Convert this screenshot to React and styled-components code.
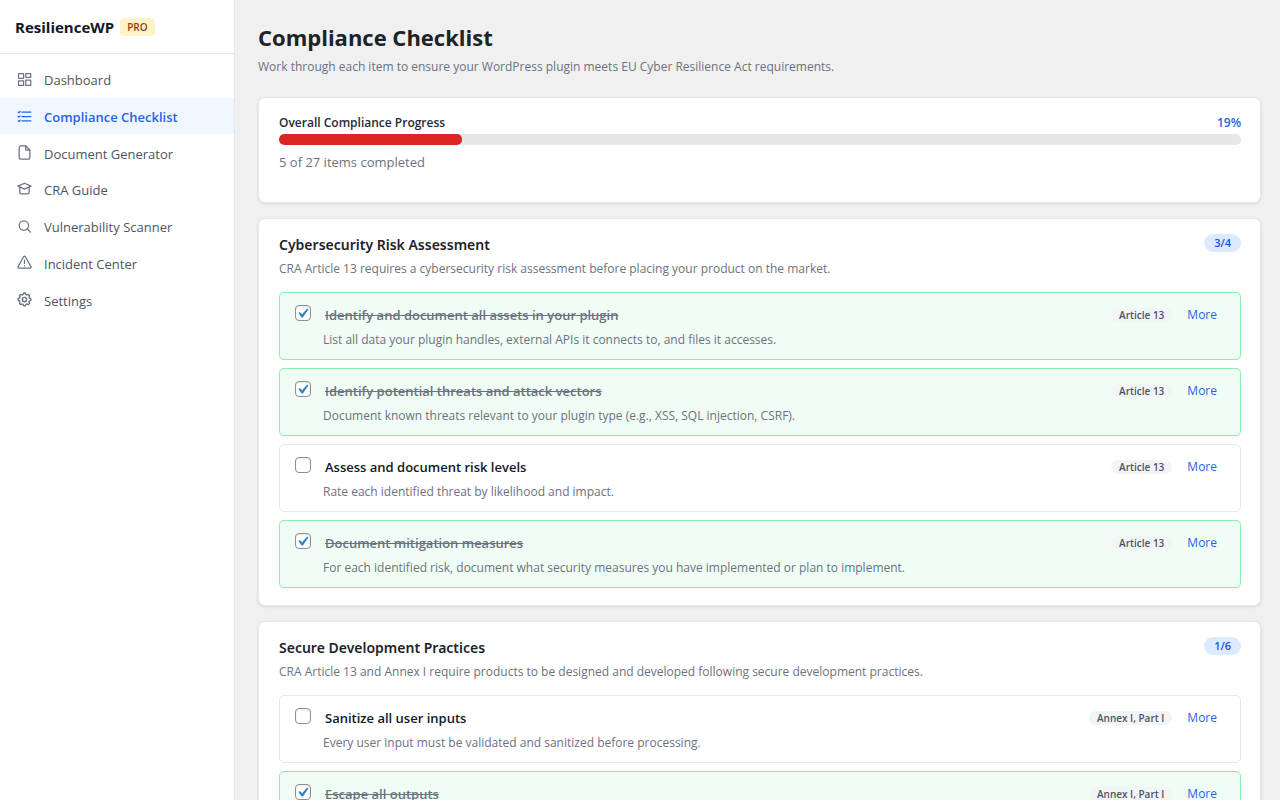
import React from "react";
import styled, { createGlobalStyle } from "styled-components";

const navItems = [
  { icon: "dashboard", label: "Dashboard" },
  { icon: "list", label: "Compliance Checklist", active: true },
  { icon: "file", label: "Document Generator" },
  { icon: "cap", label: "CRA Guide" },
  { icon: "search", label: "Vulnerability Scanner" },
  { icon: "alert", label: "Incident Center" },
  { icon: "gear", label: "Settings" },
];

const sections = [
  {
    title: "Cybersecurity Risk Assessment",
    count: "3/4",
    text: "CRA Article 13 requires a cybersecurity risk assessment before placing your product on the market.",
    items: [
      {
        id: "assets",
        title: "Identify and document all assets in your plugin",
        text: "List all data your plugin handles, external APIs it connects to, and files it accesses.",
        tag: "Article 13",
        done: true,
      },
      {
        id: "threats",
        title: "Identify potential threats and attack vectors",
        text: "Document known threats relevant to your plugin type (e.g., XSS, SQL injection, CSRF).",
        tag: "Article 13",
        done: true,
      },
      {
        id: "risk-levels",
        title: "Assess and document risk levels",
        text: "Rate each identified threat by likelihood and impact.",
        tag: "Article 13",
        done: false,
      },
      {
        id: "mitigation",
        title: "Document mitigation measures",
        text: "For each identified risk, document what security measures you have implemented or plan to implement.",
        tag: "Article 13",
        done: true,
      },
    ],
  },
  {
    title: "Secure Development Practices",
    count: "1/6",
    text: "CRA Article 13 and Annex I require products to be designed and developed following secure development practices.",
    items: [
      {
        id: "sanitize",
        title: "Sanitize all user inputs",
        text: "Every user input must be validated and sanitized before processing.",
        tag: "Annex I, Part I",
        done: false,
      },
      {
        id: "escape",
        title: "Escape all outputs",
        tag: "Annex I, Part I",
        done: true,
      },
    ],
  },
];

const icons = {
  dashboard: (
    <>
      <rect x="2.5" y="2.5" width="8" height="7.5" rx="0.5" />
      <rect x="14" y="2.5" width="8" height="6" rx="0.5" />
      <rect x="2.5" y="14" width="8" height="7.5" rx="0.5" />
      <rect x="14" y="13" width="8" height="8.5" rx="0.5" />
    </>
  ),
  list: (
    <>
      <path d="M8 5h14M8 12h14M8 19h14" />
      <path d="M2 5l1 1 2-2M2 12l1 1 2-2M2 19l1 1 2-2" />
    </>
  ),
  file: (
    <>
      <path d="M14 1.5H6A2.5 2.5 0 0 0 3.5 4v16A2.5 2.5 0 0 0 6 22.5h12a2.5 2.5 0 0 0 2.5-2.5V8z" />
      <path d="M14 1.5V8h6.5" />
    </>
  ),
  cap: (
    <>
      <path d="M12 2 1.5 6.500 12 11.5l10.500-5z" />
      <path d="M4.500 8.500V16c0 2 1 3 3 3h9c2 0 3-1 3-3V8.500" />
    </>
  ),
  search: (
    <>
      <circle cx="11" cy="10.5" r="7.5" />
      <path d="m16.500 16 5 5" />
    </>
  ),
  alert: (
    <>
      <path d="M10.800 2.500 1.500 19a1.500 1.500 0 0 0 1.200 2h18.600a1.500 1.500 0 0 0 1.200-2L13.200 2.500a1.400 1.400 0 0 0-2.400 0z" />
      <path d="M12 8.500v5M12 17v0.500" />
    </>
  ),
  gear: (
    <g transform="translate(-1.8 -1.8) scale(1.15)">
      <path d="M10.325 4.317c.426-1.756 2.924-1.756 3.350 0a1.724 1.724 0 0 0 2.573 1.066c1.543-.940 3.310.826 2.370 2.370a1.724 1.724 0 0 0 1.065 2.572c1.756.426 1.756 2.924 0 3.350a1.724 1.724 0 0 0-1.066 2.573c.940 1.543-.826 3.310-2.370 2.370a1.724 1.724 0 0 0-2.572 1.065c-.426 1.756-2.924 1.756-3.350 0a1.724 1.724 0 0 0-2.573-1.066c-1.543.940-3.310-.826-2.370-2.370a1.724 1.724 0 0 0-1.065-2.572c-1.756-.426-1.756-2.924 0-3.350a1.724 1.724 0 0 0 1.066-2.573c-.940-1.543.826-3.310 2.370-2.370.996.608 2.296.070 2.572-1.065z" />
      <circle cx="12" cy="12" r="3" />
    </g>
  ),
};

function App() {
  return (
    <Layout>
      <GlobalStyle />
      <Sidebar>
        <Brand>
          <BrandName>ResilienceWP</BrandName>
          <ProBadge>PRO</ProBadge>
        </Brand>
        <Nav>
          {navItems.map((item) => (
            <NavLink href="#" key={item.label} $active={item.active}>
              <NavIcon viewBox="0 0 24 24">{icons[item.icon]}</NavIcon>
              <NavLabel>{item.label}</NavLabel>
            </NavLink>
          ))}
        </Nav>
      </Sidebar>
      <Main>
        <PageTitle>Compliance Checklist</PageTitle>
        <PageText>
          Work through each item to ensure your WordPress plugin meets EU Cyber
          Resilience Act requirements.
        </PageText>
        <ProgressCard>
          <ProgressHead>
            <span>Overall Compliance Progress</span>
            <Percent>19%</Percent>
          </ProgressHead>
          <Track>
            <Fill style={{ width: "19%" }} />
          </Track>
          <ProgressText>5 of 27 items completed</ProgressText>
        </ProgressCard>
        {sections.map((section) => (
          <Card key={section.title}>
            <CardHead>
              <CardTitle>{section.title}</CardTitle>
              <Count>{section.count}</Count>
            </CardHead>
            <CardText>{section.text}</CardText>
            <Items>
              {section.items.map((item) => (
                <Item key={item.id} $done={item.done}>
                  <Checkbox id={item.id} type="checkbox" defaultChecked={item.done} />
                  <ItemBody>
                    <ItemHead>
                      <ItemTitle htmlFor={item.id} $done={item.done}>
                        {item.title}
                      </ItemTitle>
                      <Tag>{item.tag}</Tag>
                      <MoreButton type="button">More</MoreButton>
                    </ItemHead>
                    {item.text && <ItemText>{item.text}</ItemText>}
                  </ItemBody>
                </Item>
              ))}
            </Items>
          </Card>
        ))}
      </Main>
    </Layout>
  );
}

export default App;

const GlobalStyle = createGlobalStyle`
  * {
    box-sizing: border-box;
  }
  body {
    margin: 0;
    background: #f0f0f1;
    font-family: "Segoe UI", "Open Sans", "Noto Sans", sans-serif;
    font-size: 13px;
    color: #1d2327;
  }
  h1, h2, p {
    margin: 0;
  }
`;

const Layout = styled.div`
  display: flex;
  min-height: 100vh;
`;

const Sidebar = styled.aside`
  flex: 0 0 235px;
  background: #fff;
  border-right: 1px solid #e5e7eb;
`;

const Brand = styled.div`
  display: flex;
  align-items: center;
  gap: 6px;
  height: 54px;
  padding: 1px 15px 0;
  border-bottom: 1px solid #e5e7eb;
`;

const BrandName = styled.span`
  font-size: 15px;
  font-weight: 700;
  line-height: 20px;
  color: #111827;
`;

const ProBadge = styled.span`
  padding: 0 7px;
  border-radius: 4px;
  background: #fef3c7;
  color: #92400e;
  font-size: 10px;
  font-weight: 600;
  line-height: 18px;
`;

const Nav = styled.nav`
  display: grid;
  grid-auto-rows: 1fr;
  height: 257px;
  margin-top: 7px;
`;

const NavLink = styled.a`
  display: flex;
  align-items: center;
  gap: 12px;
  padding: 0 17px;
  text-decoration: none;
  color: ${(props) => (props.$active ? "#2563eb" : "#4b5563")};
  background: ${(props) => (props.$active ? "#eff6ff" : "transparent")};
  font-weight: ${(props) => (props.$active ? 600 : 400)};

  svg {
    stroke: ${(props) => (props.$active ? "#2563eb" : "#6b7280")};
  }
`;

const NavIcon = styled.svg`
  width: 15px;
  height: 15px;
  fill: none;
  stroke-width: 2;
  stroke-linecap: round;
  stroke-linejoin: round;
`;

const NavLabel = styled.span`
  padding-top: 2px;
`;

const Main = styled.main`
  flex: 1;
  min-width: 0;
  padding: 21px 19px 0 23px;
`;

const PageTitle = styled.h1`
  font-size: 22px;
  font-weight: 700;
  line-height: 32px;
`;

const PageText = styled.p`
  margin-top: 5px;
  line-height: 18px;
  font-size: 12px;
  color: #6b7280;
`;

const Card = styled.section`
  margin-bottom: 15px;
  padding: 15px 19px 17px 20px;
  background: #fff;
  border: 1px solid #e5e7eb;
  border-radius: 7px;
  box-shadow: 0 1px 3px rgba(0, 0, 0, 0.1);
`;

const ProgressCard = styled(Card)`
  margin-top: 21px;
  padding-top: 16px;
  padding-bottom: 30px;
`;

const ProgressHead = styled.div`
  display: flex;
  justify-content: space-between;
  line-height: 18px;
  font-size: 12px;
  font-weight: 600;
  color: #1f2937;
`;

const Percent = styled.span`
  color: #2563eb;
`;

const Track = styled.div`
  height: 11px;
  margin-top: 2px;
  border-radius: 5px;
  background: #e5e7eb;
  overflow: hidden;
`;

const Fill = styled.div`
  height: 100%;
  border-radius: 5px;
  background: #dc2626;
`;

const ProgressText = styled.p`
  margin-top: 7px;
  line-height: 20px;
  color: #6b7280;
`;

const CardHead = styled.div`
  display: flex;
  justify-content: space-between;
  align-items: flex-start;
`;

const CardTitle = styled.h2`
  font-family: "Noto Sans", sans-serif;
  font-size: 14px;
  font-weight: 600;
  line-height: 22px;
`;

const Count = styled.span`
  padding: 0 10px;
  border-radius: 9px;
  background: #dbeafe;
  color: #1d4ed8;
  font-size: 11px;
  font-weight: 600;
  line-height: 18px;
`;

const CardText = styled.p`
  margin-top: 3px;
  line-height: 20px;
  font-size: 12px;
  color: #6b7280;
`;

const Items = styled.div`
  display: flex;
  flex-direction: column;
  gap: 8px;
  margin-top: 13px;
`;

const Item = styled.div`
  display: flex;
  gap: 12px;
  min-height: 68px;
  padding: 12px 16px 7px 15px;
  border: 1px solid ${(props) => (props.$done ? "#86efac" : "#e5e7eb")};
  border-radius: 5px;
  background: ${(props) => (props.$done ? "#f0fdf4" : "#fff")};
`;

const Checkbox = styled.input`
  appearance: none;
  flex: none;
  width: 16px;
  height: 16px;
  margin: 0;
  border: 1px solid #8c8f94;
  border-radius: 4px;
  background: #fff;
  box-shadow: inset 0 1px 2px rgba(0, 0, 0, 0.1);

  &:checked::before {
    content: "";
    display: block;
    width: 19px;
    height: 19px;
    margin: -2px 0 0 -3px;
    background: #3582c4;
    clip-path: polygon(74% 24%, 81% 29%, 52% 71%, 45% 71%, 29% 48%, 36% 42%, 48% 54%);
  }
`;

const ItemBody = styled.div`
  flex: 1;
  min-width: 0;
`;

const ItemHead = styled.div`
  display: flex;
  align-items: center;
  height: 20px;
  padding: 0 7px 0 2px;
`;

const ItemTitle = styled.label`
  flex: 1;
  font-weight: 600;
  line-height: 20px;
  color: ${(props) => (props.$done ? "#6b7280" : "#111827")};
  text-decoration: ${(props) => (props.$done ? "line-through" : "none")};
`;

const Tag = styled.span`
  padding: 0 8px;
  border-radius: 7px;
  background: #f3f4f6;
  color: #4b5563;
  font-size: 10px;
  font-weight: 600;
  line-height: 14px;
`;

const MoreButton = styled.button`
  margin-left: 15px;
  padding: 0;
  border: 0;
  background: none;
  color: #2563eb;
  font: inherit;
  font-size: 12px;
  line-height: 20px;
  cursor: pointer;
`;

const ItemText = styled.p`
  margin-top: 5px;
  line-height: 20px;
  font-size: 12px;
  color: #6b7280;
`;
